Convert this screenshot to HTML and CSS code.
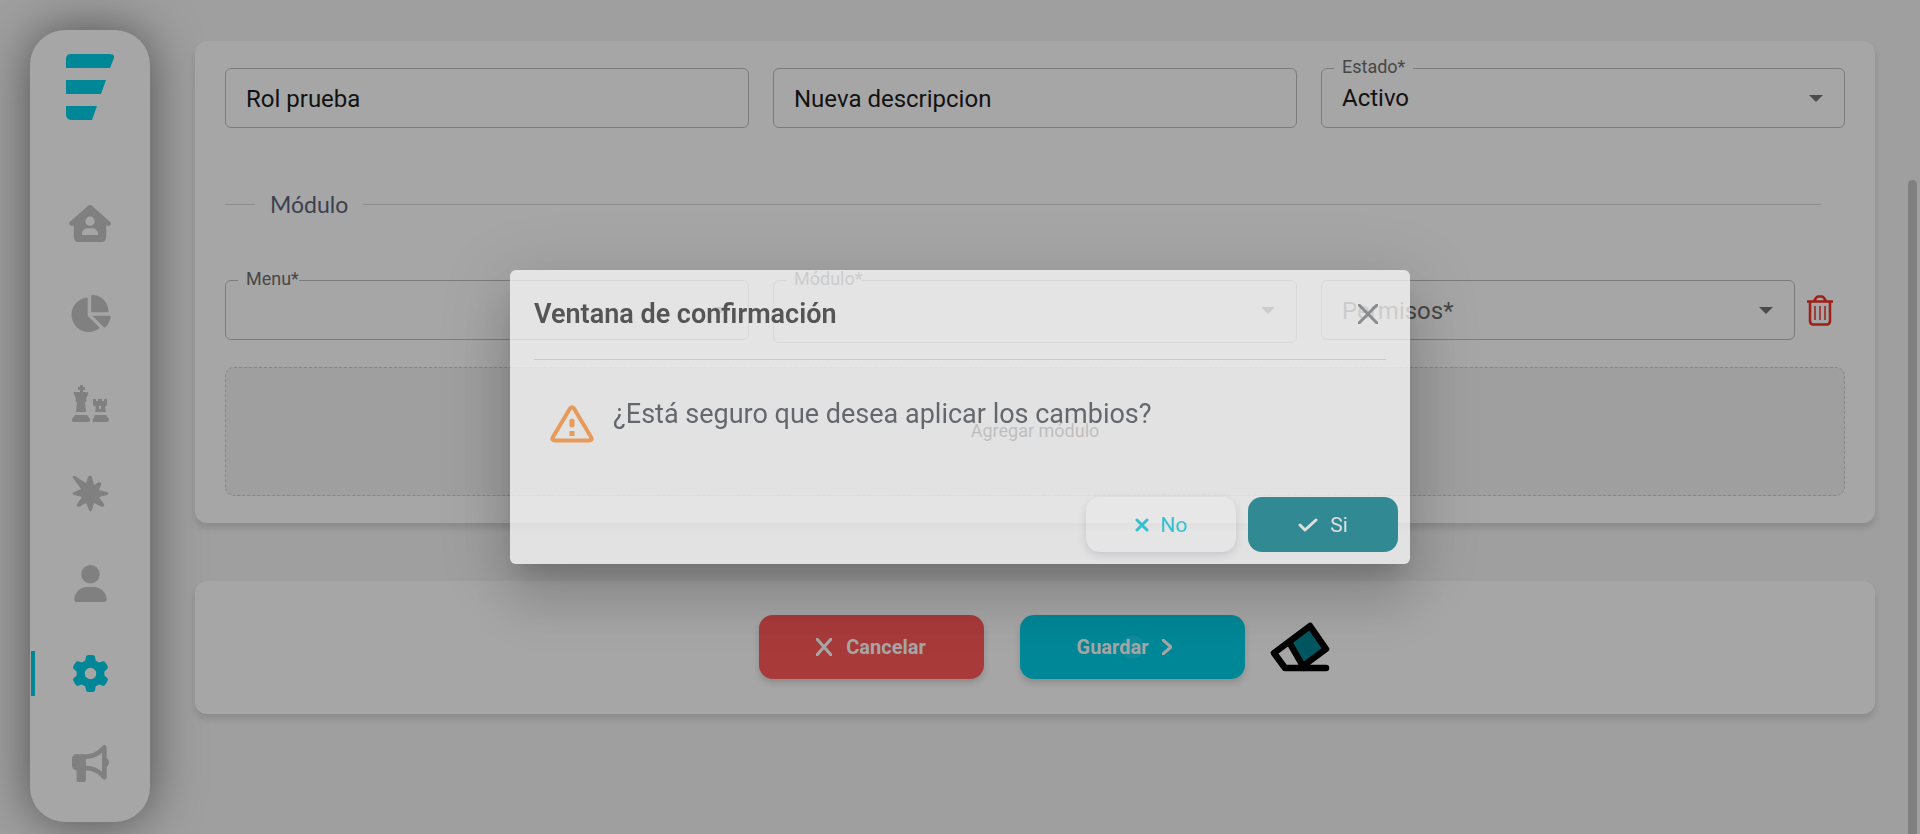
FILE: index.html
```html
<!DOCTYPE html>
<html lang="es">
<head>
<meta charset="utf-8">
<title>Roles</title>
<link rel="stylesheet" href="styles.css">
</head>
<body>
<div class="app">
  <nav class="sidebar" aria-label="Principal">
    <a class="logo" href="#" aria-label="Inicio">
      <svg width="48" height="66" viewBox="0 0 48 66"><path d="M5 0H44Q49 0 48 4L44 14H0V5Q0 0 5 0ZM0 26H40L35 40H0ZM0 52H31L26 66H6Q0 66 0 60Z"/></svg>
    </a>
    <a class="nav-item" href="#" aria-label="Casa"><svg width="42" height="37" viewBox="0 0 576 512"><path fill-rule="evenodd" d="M575.8 255.500c0 18-15 32.100-32 32.100h-32l.7 160.200c.2 35.500-28.500 64.300-64 64.300H128.100c-35.300 0-64-28.700-64-64V287.600H32c-18 0-32-14-32-32.100 0-9 3-17 10-24L266.400 8c7-7 15-8 22-8s15 2 21 7L564.800 231.500c8 7 12 15 11 24zM352 224a64 64 0 1 0-128 0 64 64 0 1 0 128 0zm-96 96c-44.200 0-80 35.800-80 80 0 8.800 7.200 16 16 16h192c8.800 0 16-7.200 16-16 0-44.200-35.800-80-80-80h-64z"/></svg></a>
    <a class="nav-item" href="#" aria-label="Reportes"><svg width="42" height="37" viewBox="0 0 576 512"><path d="M304 240V16.600c0-9 7-16.600 16-16.600C443.700 0 544 100.300 544 224c0 9-7.600 16-16.600 16H304zM32 272C32 150.700 122.100 50.300 239 34.300c9.200-1.300 17 6.100 17 15.400V288L412.500 444.500c6.700 6.700 6.200 17.700-1.500 23.100C371.800 495.600 323.800 512 272 512 139.500 512 32 404.600 32 272zm526.400 16c9.300 0 16.600 7.800 15.400 17-7.700 55.900-34.600 105.600-73.900 142.300-6 5.600-15.400 5.200-21.200-.7L320 288h238.400z"/></svg></a>
    <a class="nav-item" href="#" aria-label="Estrategia"><svg width="37" height="37" viewBox="0 0 37 37"><path d="M8 0h3v2h2v3h-2v2h4q2 0 1 2l-2 5q1 1 0 3h-1l1 10H4l1-10H4q-1-2 0-3L2 9Q1 7 3 7h5V5H6V2h2ZM3 30h12l3 4q1 3-2 3H2q-3 0-2-3ZM21 14h3v2h2v-2h4v2h2v-2h3v6l-2 2 1 5H23l1-5-3-2ZM27 21v3h2v-3q-1-1-2 0ZM23 30h11l3 4q0 3-2 3H22q-2 0-1-3Z" fill-rule="evenodd"/></svg></a>
    <a class="nav-item" href="#" aria-label="Novedades"><svg width="37" height="37" viewBox="0 0 37 37"><path d="M1 3Q0 0 3 1L14 8 16 2Q18-1 20 2L22 10 27 7Q30 7 29 10L27 15 35 17Q38 18.500 35 20L27 22 32 29Q33 32 30 32L22 28 20 35Q18.500 38 17 35L14 28 7 32Q4 32 5 29L10 22 2 20Q-1 18.500 2 17L9 14Z"/></svg></a>
    <a class="nav-item" href="#" aria-label="Usuarios"><svg width="33" height="37" viewBox="0 0 448 512"><path d="M224 256a128 128 0 1 0 0-256 128 128 0 1 0 0 256zm-45.700 48C79.800 304 0 383.800 0 482.300 0 498.700 13.300 512 29.700 512h388.600c16.400 0 29.700-13.300 29.700-29.700 0-98.500-79.800-178.300-178.300-178.300h-91.400z"/></svg></a>
    <a class="nav-item active" href="#" aria-label="Configuración" aria-current="page"><svg width="37" height="37" viewBox="0 0 512 512"><path d="M495.900 166.600c3.200 8.700.5 18.400-6.400 24.600l-43.300 39.400c1.100 8.300 1.700 16.800 1.700 25.400s-.6 17.100-1.700 25.400l43.300 39.400c6.900 6.200 9.600 15.900 6.400 24.600-4.400 11.900-9.700 23.300-15.800 34.300l-4.700 8.100c-6.600 11-14 21.400-22.100 31.200-5.900 7.200-15.700 9.600-24.500 6.800l-55.700-17.700c-13.400 10.300-28.200 18.900-44 25.400l-12.500 57.100c-2 9.100-9 16.300-18.200 17.800-13.800 2.300-28 3.500-42.500 3.500s-28.700-1.200-42.500-3.500c-9.200-1.500-16.200-8.700-18.200-17.800l-12.500-57.100c-15.800-6.500-30.600-15.100-44-25.400L83.100 425.900c-8.800 2.800-18.600.3-24.500-6.800-8.100-9.800-15.500-20.200-22.100-31.200l-4.700-8.100c-6.100-11-11.400-22.400-15.800-34.300-3.200-8.700-.5-18.400 6.400-24.600l43.300-39.400C64.600 273.100 64 264.600 64 256s.6-17.100 1.700-25.400L22.400 191.200c-6.900-6.200-9.600-15.900-6.400-24.600 4.400-11.900 9.700-23.300 15.800-34.300l4.700-8.100c6.600-11 14-21.400 22.100-31.200 5.900-7.200 15.700-9.600 24.500-6.800l55.700 17.700c13.400-10.300 28.200-18.900 44-25.400l12.500-57.100c2-9.100 9-16.300 18.200-17.800C227.300 1.200 241.500 0 256 0s28.700 1.200 42.500 3.500c9.200 1.500 16.200 8.700 18.200 17.800l12.500 57.100c15.800 6.500 30.600 15.100 44 25.400l55.700-17.700c8.800-2.800 18.600-.3 24.500 6.800 8.100 9.800 15.500 20.200 22.100 31.200l4.700 8.100c6.100 11 11.400 22.400 15.800 34.300zM256 336a80 80 0 1 0 0-160 80 80 0 1 0 0 160z"/></svg></a>
    <a class="nav-item" href="#" aria-label="Anuncios"><svg width="37" height="37" viewBox="0 0 512 512"><path d="M480 32c0-12.900-7.800-24.600-19.800-29.600s-25.700-2.200-34.900 6.900L381.700 53c-48 48-113.100 75-181 75H64c-35.300 0-64 28.700-64 64v96c0 35.300 28.700 64 64 64v128c0 17.700 14.300 32 32 32h64c17.700 0 32-14.300 32-32V352h8.700c67.900 0 133 27 181 75l43.600 43.600c9.200 9.200 22.900 11.900 34.900 6.900s19.800-16.600 19.800-29.600V300.400c18.600-8.800 32-32.500 32-60.400s-13.400-51.600-32-60.400V32zm-64 76.700v262.600C357.200 317.800 280.500 288 200.700 288H192v-96h8.700c79.800 0 156.500-29.800 215.300-83.300z"/></svg></a>
  </nav>

  <main class="content">
    <section class="card">
      <div class="row">
        <div class="field"><input type="text" value="Rol prueba" aria-label="Nombre"></div>
        <div class="field"><input type="text" value="Nueva descripcion" aria-label="Descripción"></div>
        <div class="field"><label for="estado">Estado*</label><select id="estado"><option>Activo</option></select></div>
      </div>
      <h2 class="divider">Módulo</h2>
      <div class="row">
        <div class="field"><label class="snug" for="menu">Menu*</label><select id="menu"><option></option></select></div>
        <div class="field"><label class="snug" for="modulo">Módulo*</label><select id="modulo" class="tall"><option></option></select></div>
        <div class="with-action">
          <div class="field"><select class="muted" aria-label="Permisos"><option>Permisos*</option></select></div>
          <button class="trash" type="button" aria-label="Eliminar"><svg width="26" height="31" viewBox="0 0 26 31" fill="none" stroke="currentColor" stroke-width="2.500"><path d="M0 6.500h26M7 6 9 3Q10 1.500 11 1.500h4Q16 1.500 17 3l2 3"/><path d="M3 6v20q0 3.500 3.500 3.500h13q3.500 0 3.500-3.500V6"/><path stroke-width="1.500" d="M8 11v14M13 11v14M18 11v14"/></svg></button>
        </div>
      </div>
      <button class="add" type="button">Agregar módulo</button>
    </section>

    <section class="card actions">
      <button class="btn cancel" type="button"><svg width="16" height="18" viewBox="0 0 16 18"><path d="M1 1 15 17M15 1 1 17"/></svg>Cancelar</button>
      <button class="btn save" type="button">Guardar<svg width="10" height="16" viewBox="0 0 10 16"><path d="M1 1 9 8 1 15"/></svg></button>
      <button class="eraser" type="button" aria-label="Limpiar"><svg width="60" height="50" viewBox="0 0 60 50"><path fill="#005660" d="M20 21 40 6 55 30 33 45Z"/><path fill="none" stroke="#000" stroke-width="6.500" stroke-linejoin="round" stroke-linecap="round" d="M4 31 40 4 56 27 33 44M19 20 34 46M4 31 15 46H56"/></svg></button>
    </section>
  </main>
</div>

<div class="scrollbar"></div>
<div class="backdrop">
  <div class="dialog" role="dialog" aria-modal="true" aria-labelledby="dlg-title">
    <header class="dialog-head">
      <h1 id="dlg-title">Ventana de confirmación</h1>
      <button class="close" type="button" aria-label="Cerrar"><svg width="20" height="20" viewBox="0 0 20 20"><path d="M1 1 19 19M19 1 1 19"/></svg></button>
    </header>
    <div class="dialog-body">
      <svg width="44" height="38" viewBox="0 0 44 38"><path fill="none" stroke="currentColor" stroke-width="4" stroke-linejoin="round" d="M20 3.500Q22 1 24 3.500L41 32Q43 35.500 39 35.500H5Q1 35.500 3 32Z"/><path fill="currentColor" d="M19.500 15q2.500-3 5 0v6q-2.500 3-5 0zM19.500 26h5v5h-5z"/></svg>
      <p>¿Está seguro que desea aplicar los cambios?</p>
    </div>
    <footer class="dialog-foot">
      <button class="choice no" type="button"><svg width="14" height="14" viewBox="0 0 14 14"><path d="M2 2 12 12M12 2 2 12"/></svg>No</button>
      <button class="choice yes" type="button"><svg width="20" height="14" viewBox="0 0 20 14"><path d="M2 7 7 12 18 2"/></svg>Si</button>
    </footer>
  </div>
</div>
</body>
</html>
```
FILE: styles.css
```css
* { box-sizing: border-box; }
body {
  margin: 0;
  min-height: 100vh;
  background: #9f9f9f;
  color: #121212;
  font-family: Roboto, "Liberation Sans", sans-serif;
  overflow: hidden;
}
button, input, select { font: inherit; color: inherit; }
button { cursor: pointer; border: 0; background: none; padding: 0; }

.app { display: flex; gap: 45px; padding: 30px 45px 12px 30px; height: 100vh; }
.sidebar {
  flex: none;
  width: 120px;
  border-radius: 35px;
  background: #a6a6a6;
  box-shadow: 0 0 50px rgba(0, 0, 0, .5);
  display: flex;
  flex-direction: column;
  align-items: center;
}
.logo { flex: none; height: 66px; margin: 24px 0 81px; fill: #008797; }
.logo svg, .nav-item svg { display: block; }
.nav-item {
  flex: none;
  width: 118px;
  height: 45px;
  margin-bottom: 45px;
  display: flex;
  align-items: center;
  justify-content: center;
  fill: #808080;
  border: solid transparent;
  border-width: 0 4px;
}
.nav-item:last-child { margin-bottom: 0; }
.nav-item.active { fill: #008797; border-left-color: #008797; }

.content { flex: 1; padding-top: 11px; display: flex; flex-direction: column; gap: 58px; }
.card {
  background: #a6a6a6;
  border-radius: 12px;
  box-shadow: 0 5px 6px rgba(0, 0, 0, .12);
  padding: 27px 30px;
}
.row { display: grid; grid-template-columns: repeat(3, 1fr); gap: 24px; align-items: start; }
.field { position: relative; flex: 1; }
.field input, .field select {
  display: block;
  width: 100%;
  height: 60px;
  padding: 0 20px;
  border: 1px solid #7c7c7c;
  border-radius: 6px;
  background: transparent;
  font-size: 24px;
  appearance: none;
}
.field input { padding-top: 2px; }
.field select.tall { height: 63px; }
.field select.muted { color: #474747; padding-top: 2px; }
.field:has(select)::after {
  content: "";
  position: absolute;
  right: 22px;
  top: 27px;
  border: 7px solid transparent;
  border-top-color: #4b4b4b;
  border-bottom: 0;
}
.field label {
  position: absolute;
  left: 13px;
  top: -12px;
  padding: 0 8px;
  background: #a6a6a6;
  color: #474747;
  font-size: 18px;
  line-height: 22px;
}
.field label.snug { padding-right: 0; }
.divider {
  display: flex;
  align-items: center;
  gap: 15px;
  margin: 60px 24px 60px 0;
  font-family: Lato, Roboto, sans-serif;
  font-size: 23px;
  font-weight: 400;
  line-height: 32px;
  color: #3b4050;
}
.divider::before, .divider::after { content: ""; height: 1px; background: #8c8c8c; }
.divider::before { width: 30px; }
.divider::after { flex: 1; }
.with-action { display: flex; align-items: center; }
.trash { width: 50px; color: #9d1f17; display: flex; justify-content: center; }
.add {
  display: block;
  width: 100%;
  height: 129px;
  margin-top: 24px;
  padding-bottom: 2px;
  border: 1px dashed #868686;
  border-radius: 9px;
  background: #9f9f9f;
  font-size: 18px;
  color: #121212;
}
.actions { display: flex; justify-content: center; padding: 34px 30px 35px 48px; }
.btn {
  width: 225px;
  height: 64px;
  border-radius: 14px;
  color: #a6a6a6;
  font-size: 20px;
  font-weight: 700;
  display: flex;
  align-items: center;
  justify-content: center;
  gap: 14px;
  box-shadow: 0 4px 6px rgba(0, 0, 0, .15);
}
.btn svg, .choice svg, .close svg { fill: none; stroke: currentColor; stroke-width: 3; stroke-linecap: round; stroke-linejoin: round; }
.cancel { background: #a83a3a; margin-right: 36px; }
.save {
  background: radial-gradient(circle, #108b9a 11px, #008797 12px);
  margin-right: 25px;
  padding-right: 15px;
}
.eraser { height: 50px; margin-top: 7px; }

.scrollbar {
  position: fixed;
  right: 3px;
  top: 180px;
  bottom: 0;
  width: 9px;
  border-radius: 5px 5px 0 0;
  background: #808080;
}
.backdrop { position: fixed; inset: 0; display: flex; align-items: center; justify-content: center; }
.dialog {
  width: 900px;
  border-radius: 6px;
  background: rgba(250, 250, 250, .74);
  box-shadow: 0 16px 22px -10px rgba(0, 0, 0, .16), 0 35px 55px 4px rgba(0, 0, 0, .12), 0 13px 66px 12px rgba(0, 0, 0, .1);
}
.dialog-head {
  display: flex;
  align-items: center;
  justify-content: space-between;
  height: 90px;
  margin: 0 24px;
  padding: 0 8px 2px 0;
  border-bottom: 1px solid #cacaca;
}
.dialog-head h1 { margin: 0; font-size: 27px; font-weight: 600; color: #555; }
.close { color: #8c8c8c; width: 20px; height: 20px; }
.close svg { display: block; }
.dialog-body { display: flex; gap: 19px; padding: 36px 40px 0; height: 137px; color: #e79a5a; }
.dialog-body svg { margin-top: 9px; }
.dialog-body p { margin: 0; font-size: 27px; line-height: 36px; color: #64686d; }
.dialog-foot { display: flex; justify-content: flex-end; gap: 12px; padding: 0 12px 12px; }
.choice {
  width: 150px;
  height: 55px;
  border-radius: 14px;
  font-size: 21px;
  display: flex;
  align-items: center;
  justify-content: center;
  gap: 12px;
}
.no { background: rgba(255, 255, 255, .1); color: #32c0d0; box-shadow: 0 3px 8px rgba(0, 0, 50, .13); }
.yes { background: #318a93; color: #dedede; }
```
